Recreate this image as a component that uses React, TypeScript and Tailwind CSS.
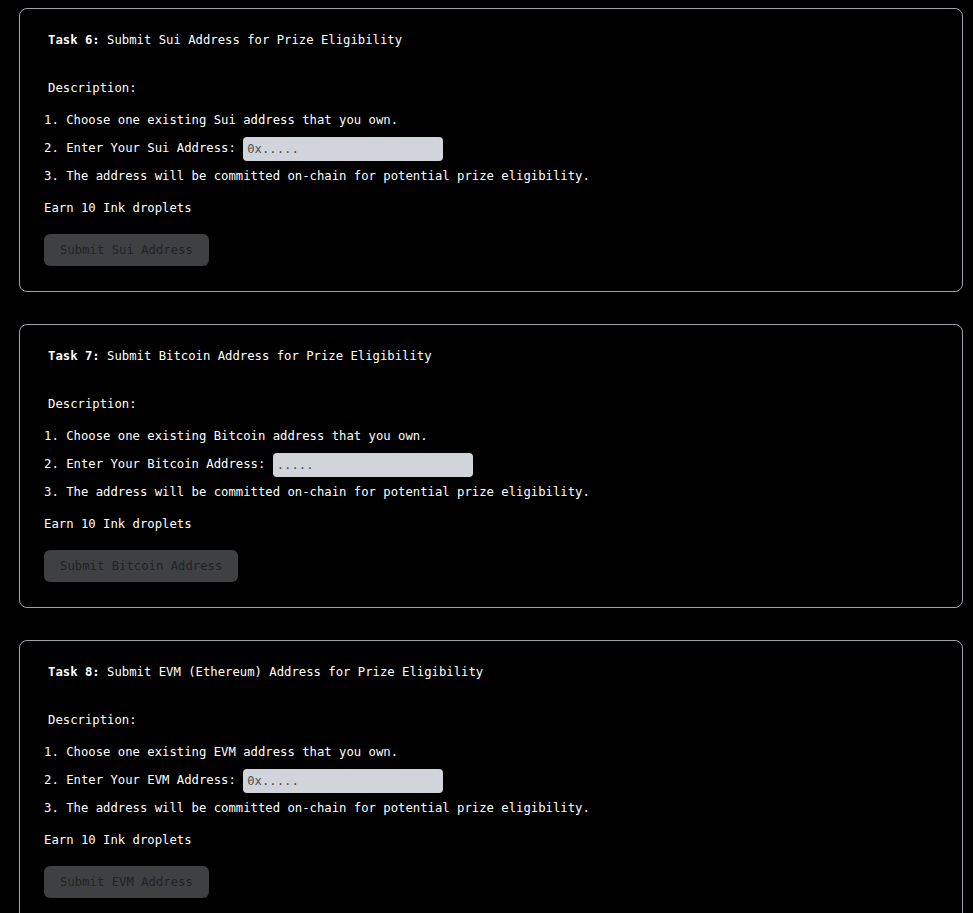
const tasks = [
  {
    n: 6,
    title: "Submit Sui Address for Prize Eligibility",
    chain: "Sui",
    placeholder: "0x.....",
  },
  {
    n: 7,
    title: "Submit Bitcoin Address for Prize Eligibility",
    chain: "Bitcoin",
    placeholder: ".....",
  },
  {
    n: 8,
    title: "Submit EVM (Ethereum) Address for Prize Eligibility",
    chain: "EVM",
    placeholder: "0x.....",
  },
];

function TaskCard({
  n,
  title,
  chain,
  placeholder,
}: {
  n: number;
  title: string;
  chain: string;
  placeholder: string;
}) {
  return (
    <div className="w-[944px] rounded-lg border border-[#9ca3af] px-6 pt-[22px] pb-[25px]">
      {/* Heading */}
      <h2 className="pl-1 leading-[18px] whitespace-pre">
        <span className="font-bold">Task {n}:</span> {title}
      </h2>

      <p className="mt-[30px] pl-1 leading-[18px]">Description:</p>

      <div className="mt-[14px] leading-[18px] whitespace-pre">
        1. Choose one existing {chain} address that you own.
      </div>
      <div className="mt-[8px] flex h-6 items-center whitespace-pre">
        <span className="-mt-[2px] leading-[18px]">
          2. Enter Your {chain} Address:{" "}
        </span>
        <input
          type="text"
          placeholder={placeholder}
          className="h-6 w-[200px] rounded bg-[#d1d5db] px-1 text-black placeholder:text-[#505050] outline-none"
        />
      </div>
      <div className="mt-[6px] leading-[18px] whitespace-pre">
        3. The address will be committed on-chain for potential prize
        eligibility.
      </div>

      <p className="mt-[14px] leading-[18px]">Earn 10 Ink droplets</p>

      <button
        disabled
        className="mt-[17px] h-8 rounded-md bg-[#3f4042] px-4 text-[#232323] whitespace-pre"
      >
        Submit {chain} Address
      </button>
    </div>
  );
}

export default function App() {
  return (
    <div
      className="min-h-screen bg-black pt-2 pl-[19px] text-[12.25px] text-white"
      style={{ fontFamily: '"DejaVu Sans Mono", "Liberation Mono", monospace' }}
    >
      <div className="flex flex-col gap-8">
        {tasks.map((t) => (
          <TaskCard key={t.n} {...t} />
        ))}
      </div>
    </div>
  );
}
